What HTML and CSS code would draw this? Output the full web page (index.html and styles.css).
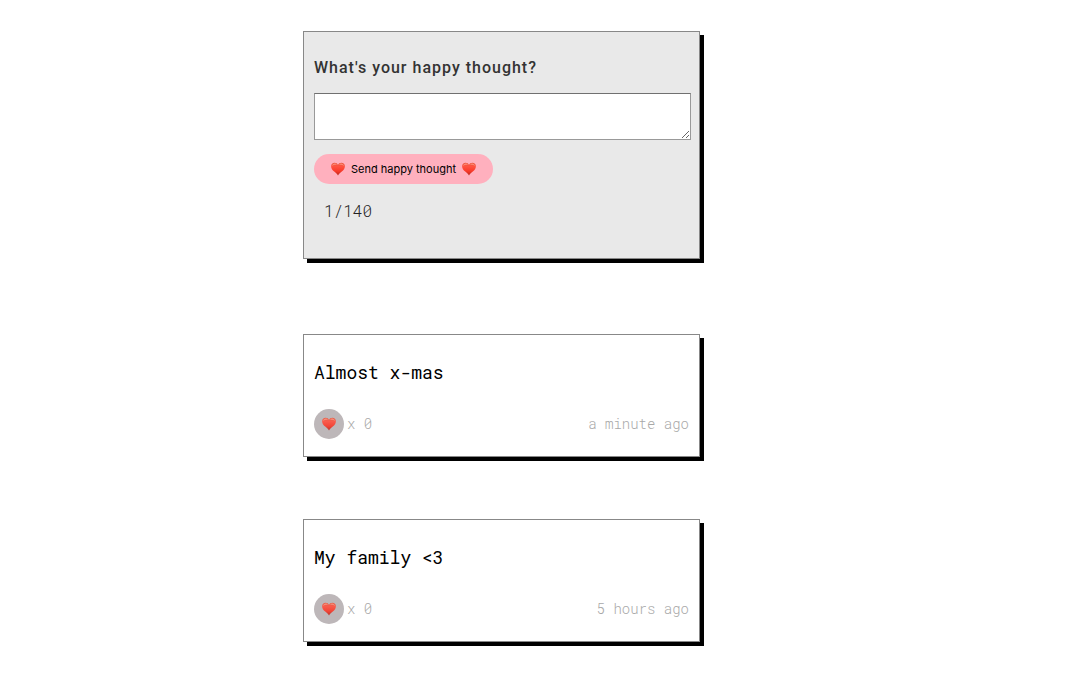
FILE: index.html
```
<!DOCTYPE html>
<html lang="en">
<head>
<meta charset="utf-8">
<meta name="viewport" content="width=device-width, initial-scale=1">
<title>Happy Thoughts</title>
<link rel="stylesheet" href="styles.css">
</head>
<body>
<svg class="defs" aria-hidden="true">
  <defs>
    <linearGradient id="heart-fill" x1="0" y1="0" x2="0" y2="1">
      <stop offset="0" stop-color="#e8583f"/>
      <stop offset="0.3" stop-color="#ff5140"/>
      <stop offset="0.65" stop-color="#f93a2a"/>
      <stop offset="1" stop-color="#b5281c"/>
    </linearGradient>
    <symbol id="heart" viewBox="0 0 14 14">
      <path fill="url(#heart-fill)" d="M7 13.600C6.400 12.200 4.900 11.200 3.200 9.600 1.400 8 .1 6.300.1 4.200.1 2.100 1.600.7 3.600.7 5.200.7 6.500 1.600 7 3 7.500 1.600 8.800.7 10.400.7c2 0 3.500 1.400 3.500 3.500 0 2.100-1.300 3.800-3.100 5.400C9.100 11.200 7.600 12.200 7 13.600z"/>
      <path fill="#ff9a84" opacity="0.8" d="M1.200 3.900C1.300 2.400 2.400 1.500 3.700 1.500c1.100 0 2 .6 2.300 1.500C4.500 2.400 2.600 2.600 1.200 3.900zM8 3C8.400 2.100 9.200 1.500 10.300 1.500c1.300 0 2.400.9 2.500 2.400C11.400 2.600 9.500 2.400 8 3z"/>
    </symbol>
  </defs>
</svg>
<main class="page">
  <form class="card form">
    <label class="title" for="thought">What's your happy thought?</label>
    <textarea class="input" id="thought"></textarea>
    <button class="send" type="button">
      <svg class="heart" aria-hidden="true"><use href="#heart"/></svg>
      <span>Send happy thought</span>
      <svg class="heart" aria-hidden="true"><use href="#heart"/></svg>
    </button>
    <p class="count">1/140</p>
  </form>
  <section class="thoughts">
    <article class="card thought">
      <h2 class="message">Almost x-mas</h2>
      <div class="meta">
        <button class="like" type="button" aria-label="Like"><svg class="heart" aria-hidden="true"><use href="#heart"/></svg></button>
        <span class="likes">x 0</span>
        <time class="time">a minute ago</time>
      </div>
    </article>
    <article class="card thought">
      <h2 class="message">My family &lt;3</h2>
      <div class="meta">
        <button class="like" type="button" aria-label="Like"><svg class="heart" aria-hidden="true"><use href="#heart"/></svg></button>
        <span class="likes">x 0</span>
        <time class="time">5 hours ago</time>
      </div>
    </article>
  </section>
</main>
</body>
</html>
```
FILE: styles.css
```
* {
  box-sizing: border-box;
}

body {
  margin: 0;
  background: #fff;
  color: #000;
  font-family: "Roboto Mono", "Liberation Mono", monospace;
  font-weight: 300;
}

.defs {
  position: absolute;
  width: 0;
  height: 0;
}

.page {
  max-width: 485px;
  margin: 0 auto;
  padding: 31px 88px 40px 0;
}

.card {
  border: 1px solid #888;
  box-shadow: 4px 4px 0 #000;
  background: #fff;
}

.form {
  display: flex;
  flex-direction: column;
  align-items: flex-start;
  padding: 25px 8px 36px 10px;
  background: #e9e9e9;
}

.title {
  margin-bottom: 15px;
  color: #333;
  font: 500 16px/21px Roboto, sans-serif;
  letter-spacing: 1px;
}

.input {
  display: block;
  width: 100%;
  height: 47px;
  margin-bottom: 14px;
  padding: 2px;
  border: 1px solid #999;
  border-top-color: #707070;
  border-radius: 0;
  background: #fff;
  font: 16px/20px Roboto, sans-serif;
}

.send {
  display: flex;
  align-items: center;
  justify-content: center;
  gap: 6px;
  height: 30px;
  margin-bottom: 16px;
  padding: 0 17px;
  border: 0;
  border-radius: 15px;
  background: #ffb0be;
  color: #000;
  font: 11px/16px Inter, sans-serif;
}

.heart {
  flex: none;
  width: 14px;
  height: 14px;
}

.count {
  margin: 0;
  padding: 0 10px;
  color: #222;
  font-size: 16px;
  line-height: 22px;
}

.thoughts {
  display: grid;
  gap: 62px;
  margin-top: 75px;
}

.thought {
  padding: 25px 10px 17px;
}

.message {
  margin: 0 0 25px;
  font-size: 18px;
  font-weight: 400;
  line-height: 24px;
}

.meta {
  display: flex;
  align-items: center;
  color: #a8a8a8;
  font-size: 14px;
  line-height: 20px;
}

.like {
  display: flex;
  align-items: center;
  justify-content: center;
  width: 30px;
  height: 30px;
  margin-right: 3px;
  padding: 0;
  border: 0;
  border-radius: 50%;
  background: #bdb7b9;
}

.like .heart {
  opacity: 0.9;
}

.time {
  margin-left: auto;
}
```
